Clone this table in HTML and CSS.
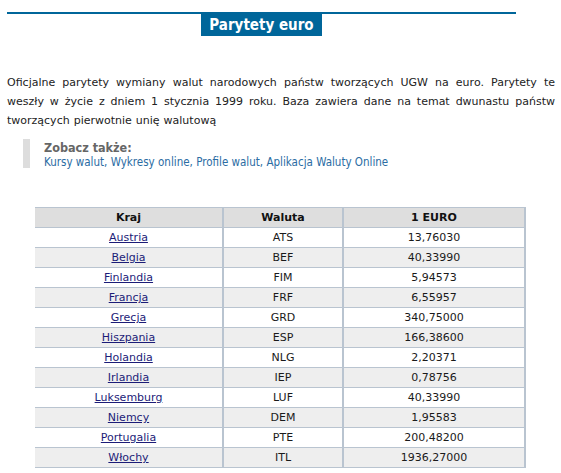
FILE: index.html
```html
<!DOCTYPE html>
<html lang="pl">
<head>
<meta charset="utf-8">
<title>Parytety euro</title>
<link rel="stylesheet" href="styles.css">
</head>
<body>
<div class="page">
  <div class="header"><h1 class="title">Parytety euro</h1></div>
  <p class="intro">Oficjalne parytety wymiany walut narodowych państw tworzących UGW na euro. Parytety te weszły w życie z dniem 1 stycznia 1999 roku. Baza zawiera dane na temat dwunastu państw tworzących pierwotnie unię walutową</p>
  <div class="see-also">
    <div class="see-title">Zobacz także:</div>
    <div class="see-links"><a href="#">Kursy walut</a>, <a href="#">Wykresy online</a>, <a href="#">Profile walut</a>, <a href="#">Aplikacja Waluty Online</a></div>
  </div>
  <table class="rates">
    <thead>
      <tr><th class="c1">Kraj</th><th class="c2">Waluta</th><th class="c3">1 EURO</th></tr>
    </thead>
    <tbody>
      <tr><td><a href="#">Austria</a></td><td>ATS</td><td>13,76030</td></tr>
      <tr><td><a href="#">Belgia</a></td><td>BEF</td><td>40,33990</td></tr>
      <tr><td><a href="#">Finlandia</a></td><td>FIM</td><td>5,94573</td></tr>
      <tr><td><a href="#">Francja</a></td><td>FRF</td><td>6,55957</td></tr>
      <tr><td><a href="#">Grecja</a></td><td>GRD</td><td>340,75000</td></tr>
      <tr><td><a href="#">Hiszpania</a></td><td>ESP</td><td>166,38600</td></tr>
      <tr><td><a href="#">Holandia</a></td><td>NLG</td><td>2,20371</td></tr>
      <tr><td><a href="#">Irlandia</a></td><td>IEP</td><td>0,78756</td></tr>
      <tr><td><a href="#">Luksemburg</a></td><td>LUF</td><td>40,33990</td></tr>
      <tr><td><a href="#">Niemcy</a></td><td>DEM</td><td>1,95583</td></tr>
      <tr><td><a href="#">Portugalia</a></td><td>PTE</td><td>200,48200</td></tr>
      <tr><td><a href="#">Włochy</a></td><td>ITL</td><td>1936,27000</td></tr>
    </tbody>
  </table>
</div>
</body>
</html>
```

FILE: styles.css
```css
html, body {
  margin: 0;
  padding: 0;
  background: #fff;
}
body {
  font-family: "DejaVu Sans Condensed", "DejaVu Sans", sans-serif;
  font-size: 11.5px;
  color: #1a1a1a;
}
.page {
  padding: 12px 6px 0 7px;
}
.header {
  width: 509px;
  border-top: 2px solid #00669a;
  text-align: center;
}
.title {
  display: inline-block;
  margin: 0;
  background: #00669a;
  color: #fff;
  font-size: 15px;
  font-weight: bold;
  height: 22px;
  line-height: 22px;
  padding: 0 8px;
}
.intro {
  margin: 37px 0 0 0;
  font-family: "DejaVu Sans", sans-serif;
  font-size: 11px;
  word-spacing: 0.5px;
  line-height: 19px;
  text-align: justify;
  color: #222;
}
.see-also {
  margin: 9px 0 0 16px;
  border-left: 7px solid #dddddd;
  padding: 1px 0 0 14px;
  height: 28px;
}
.see-title {
  font-size: 12.5px;
  font-weight: bold;
  color: #666;
  line-height: 15px;
}
.see-links {
  font-size: 11.5px;
  line-height: 14px;
  color: #2b6ca3;
}
.see-links a {
  color: #2b6ca3;
  text-decoration: none;
}
.rates {
  margin: 39px 0 0 28px;
  width: 491px;
  border-collapse: collapse;
  border-right: 2px solid #b9c4d0;
  border-top: 1px solid #b9c4d0;
  border-bottom: 1px solid #b9c4d0;
  font-family: "DejaVu Sans", sans-serif;
}
.rates th, .rates td {
  height: 19px;
  padding: 0;
  text-align: center;
  border-bottom: 1px solid #b9c4d0;
  border-right: 2px solid #b9c4d0;
  font-size: 11px;
}
.rates th {
  background: #dedede;
  font-weight: bold;
  color: #111;
}
.rates .c1 { width: 187px; }
.rates .c2 { width: 118px; }
.rates tbody tr:nth-child(even) td {
  background: #eeeeee;
}
.rates a {
  color: #1c1c78;
  text-decoration: underline;
}
```
